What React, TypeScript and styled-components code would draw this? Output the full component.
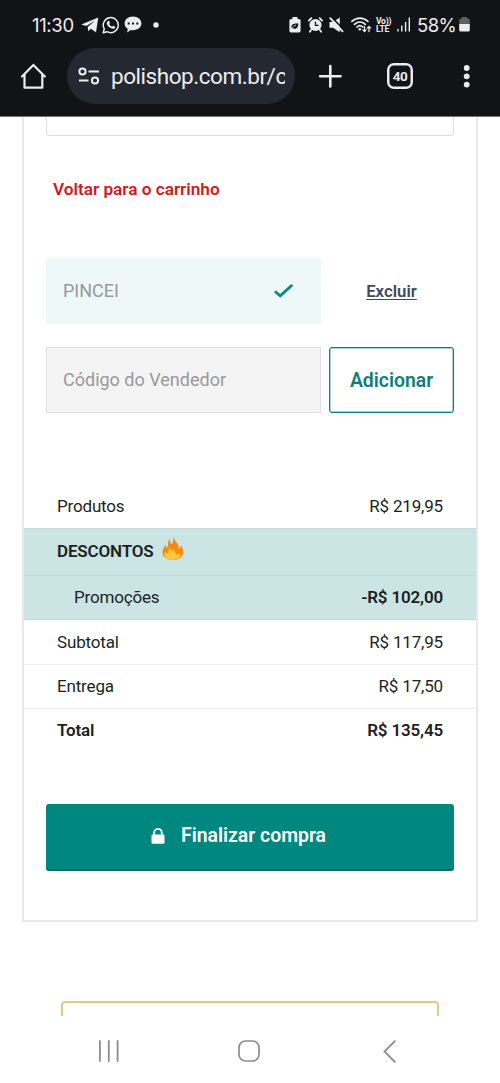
import React from "react";
import styled, { createGlobalStyle } from "styled-components";

const GlobalStyle = createGlobalStyle`
  *, *::before, *::after { box-sizing: border-box; }
  body { margin: 0; background: #fff; font-family: Roboto, "Liberation Sans", sans-serif; color: #1c1f1f; }
`;

const Screen = styled.div`
  width: 500px;
  height: 1083px;
  display: flex;
  flex-direction: column;
  overflow: hidden;
  background: #fff;
`;

const Header = styled.header`
  height: 117px;
  flex: none;
  background: #121317;
  color: #ededf0;
  border-bottom: 1px solid #77747c;
`;

const StatusBar = styled.div`
  height: 48px;
  display: flex;
  align-items: center;
  padding: 1px 30px 0 32px;
`;

const StatusText = styled.span<{ $width: number; $spacing: number; $ml?: number }>`
  width: ${(p) => p.$width}px;
  margin-left: ${(p) => p.$ml ?? 0}px;
  font-family: Inter, Roboto, sans-serif;
  font-size: 18.5px;
  letter-spacing: ${(p) => p.$spacing}px;
  line-height: 24px;
  white-space: nowrap;
`;

const Icon = styled.svg<{ $ml?: number }>`
  display: block;
  flex: none;
  margin-left: ${(p) => p.$ml ?? 0}px;
`;

const Spacer = styled.div`
  flex: 1;
`;

const Toolbar = styled.div`
  height: 56px;
  display: flex;
  align-items: center;
  padding: 0 28px 0 20px;
`;

const AddressBar = styled.div`
  width: 228px;
  height: 56px;
  margin-left: 20px;
  padding: 0 10px;
  display: flex;
  align-items: center;
  border-radius: 28px;
  background: #242831;
`;

const Url = styled.span`
  flex: 1;
  margin-left: 11px;
  overflow: hidden;
  white-space: nowrap;
  font-size: 22.5px;
  line-height: 30px;
  letter-spacing: -0.45px;
`;

const TabCount = styled.div`
  width: 26px;
  height: 26px;
  margin-left: 45px;
  display: flex;
  align-items: center;
  justify-content: center;
  border: 2px solid #ededf0;
  box-shadow: inset 0 0 0 0.5px #ededf0;
  border-radius: 7px;
  font-size: 13.5px;
  font-weight: 700;
  letter-spacing: -0.5px;
`;

const Page = styled.main`
  height: 899px;
  flex: none;
  padding: 0 22px;
  overflow: hidden;
`;

const Card = styled.section`
  height: 805px;
  border: 2px solid #e9e9ea;
  border-top: 0;
`;

const Section = styled.div`
  padding: 0 22px;
`;

const PanelEnd = styled.div`
  height: 19px;
  border: 1px solid #dedede;
  border-top: 0;
  border-radius: 0 0 3px 3px;
`;

const BackLink = styled.a`
  display: block;
  margin: 41px 0 0 7px;
  color: #d21a20;
  font-size: 17.2px;
  font-weight: 600;
  line-height: 24px;
`;

const FieldRow = styled.div<{ $top: number }>`
  margin-top: ${(p) => p.$top}px;
  height: 66px;
  display: flex;
  gap: 8px;
`;

const Field = styled.div<{ $applied?: boolean }>`
  width: 275px;
  display: flex;
  align-items: center;
  justify-content: space-between;
  padding: 0 26px 0 16px;
  border: 1px solid ${(p) => (p.$applied ? "#eff8f8" : "#e0e0e0")};
  background: ${(p) => (p.$applied ? "#eff8f8" : "#f4f4f4")};
  color: #999;
  font-size: 18px;
`;

const FieldText = styled.span`
  padding-bottom: 2px;
`;

const RemoveLink = styled.a`
  flex: 1;
  display: flex;
  align-items: center;
  justify-content: center;
  color: #424959;
  font-size: 16.8px;
  font-weight: 600;
  text-decoration: underline;
  text-decoration-thickness: 1px;
  text-underline-offset: 2px;
`;

const AddButton = styled.button`
  flex: 1;
  padding: 0;
  border: 1px solid #0b7f79;
  box-shadow: inset 0 0 0 1px rgba(11, 127, 121, 0.35);
  border-radius: 3px;
  background: #fff;
  color: #0b7f79;
  font: 600 19.4px Roboto, sans-serif;
`;

const Totals = styled.div`
  margin-top: 71px;
`;

const Row = styled.div<{ $height: number; $tinted?: boolean; $line?: string; $indent?: boolean }>`
  height: ${(p) => p.$height}px;
  display: flex;
  align-items: center;
  justify-content: space-between;
  padding: 0 33px 0 ${(p) => (p.$indent ? 50 : 33)}px;
  border-bottom: 1px solid ${(p) => p.$line ?? "transparent"};
  background: ${(p) => (p.$tinted ? "#cbe5e4" : "transparent")};
  font-size: 17px;
  letter-spacing: -0.17px;
`;

const Cell = styled.span<{ $bold?: boolean; $lift?: number }>`
  display: flex;
  align-items: center;
  font-weight: ${(p) => (p.$bold ? 600 : 400)};
  padding-bottom: ${(p) => p.$lift ?? 0}px;
`;

const CheckoutButton = styled.button`
  width: 100%;
  height: 67px;
  margin-top: 51px;
  padding: 0 23px 2px 0;
  display: flex;
  align-items: center;
  justify-content: center;
  gap: 16px;
  border: 0;
  border-bottom: 2px solid #096a66;
  border-radius: 3px;
  background: #008780;
  color: #fff;
  font: 600 19.4px Roboto, sans-serif;
`;

const Notice = styled.div`
  height: 40px;
  margin: 79px 39px 0;
  border: 2px solid #e6c785;
  border-radius: 4px;
`;

const NavBar = styled.nav`
  height: 67px;
  display: flex;
  align-items: center;
  padding: 3px 0 0 98px;
`;

const FlameIcon = styled(Icon)`
  margin-bottom: 5px;
`;

const Flame = () => (
  <FlameIcon $ml={9} width="22" height="24" viewBox="0 0 22 24">
    <path d="M3.100 7.400c.2 2 1 3 1.900 3C7.300 10.200 4.600 5 7.900 1.500c-.3 3 .5 5.300 1.700 5.300C11.600 6.800 9.900 3.400 12.200.6c.2 4.700 5 5.800 4.500 10.200-.2 1.600 1.400 1.500 1.600.1.100-1.100 0-1.700 1-3 .1 2.500 2.300 3.500 2.100 7-.3 4.800-4.400 8.100-10.600 8.100C4.600 23 .6 20 .5 15.300.4 12 2.500 10.500 3.100 7.400z" fill="#f28c0f" />
    <path d="M2.300 17.700c0-1.300.4-2.300 1.100-3.100.2 1.500 1 2.300 1.900 2.100 1.900-.4.100-3.700 2.800-6.400.1 2 .5 3.500 1.500 3.600 1.300-.1.700-1.400 1.500-2.400.4 2.600 3 3.200 2.500 5.500-.1 1.300 1.900 1.200 2.200-.9.500 1 .9 1.400 2.200.3.600 1.400.8 2.300.3 3.200-1.200 2.100-3.800 3.300-7.500 3.300-4.900 0-8.500-2.200-8.500-5.200z" fill="#fbc740" />
  </FlameIcon>
);

const BatterySaver = () => (
  <Icon width="12" height="16" viewBox="0 0 12 16">
    <path d="M3.500 0h5v2H10a1.600 1.600 0 0 1 1.600 1.600v10.200a1.600 1.600 0 0 1-1.600 1.600H2A1.600 1.600 0 0 1 .4 13.800V3.600A1.600 1.600 0 0 1 2 2h1.500z" fill="#ededf0" />
    <path d="M2.500 9.400c0-2.400 3-2.800 6.800-3.200.2 3.400-1.300 5.600-3.900 5.600-.7 0-1.300-.3-1.700-.7l-1.300 1" fill="#121317" />
    <path d="M2.200 12.100c1.500-2.500 3.100-3.400 4.900-4.100" stroke="#ededf0" strokeWidth=".8" fill="none" />
  </Icon>
);

const Alarm = () => (
  <Icon $ml={7} width="15" height="16" viewBox="0 0 15 16">
    <circle cx="7.500" cy="8" r="6.100" fill="#ededf0" />
    <path d="M.9 3.600 3.300 1.200M14.100 3.600 11.700 1.200M3 13l-1.100 1.700M12 13l1.100 1.700" stroke="#ededf0" strokeWidth="1.800" strokeLinecap="round" />
    <path d="M7.500 4.700v3.700h3" stroke="#121317" strokeWidth="1.300" fill="none" />
  </Icon>
);

const Muted = () => (
  <Icon $ml={6} width="16" height="16" viewBox="0 0 16 16">
    <path d="M.5 5h3.600L10.800.6v14.600L4.100 10.700H.5z" fill="#ededf0" />
    <path d="M2.600.4 15.500 13.200" stroke="#121317" strokeWidth="1.600" />
    <path d="M1.200 1.200 13.600 14.300" stroke="#ededf0" strokeWidth="1.800" strokeLinecap="round" />
  </Icon>
);

const Wifi = () => (
  <Icon $ml={6} width="21" height="16" viewBox="0 0 21 16">
    <g fill="none" stroke="#ededf0" strokeWidth="1.700" strokeLinecap="round">
      <path d="M.9 4.400c4.600-4.400 11.400-4.400 16 0M3.500 7.300c3.200-3 7.600-3 10.800 0M6 10c1.700-1.600 4-1.600 5.700 0" />
      <path d="M13.500 9.500v5m-1.600-1.600 1.600 1.700 1.600-1.700M18 14.500v-5m-1.600 1.600L18 9.400l1.600 1.700" strokeWidth="1.300" />
    </g>
    <circle cx="8.800" cy="12.300" r="1.300" fill="#ededf0" />
  </Icon>
);

const VoLteBadge = styled.span`
  width: 16px;
  margin-left: 4px;
  display: flex;
  flex-direction: column;
  font-size: 8.6px;
  font-weight: 700;
  line-height: 8px;
  letter-spacing: -0.3px;
  white-space: nowrap;
`;

const Signal = () => (
  <Icon $ml={5} width="14" height="15" viewBox="0 0 14 15">
    <path d="M1 12.500v1.500M4.800 9v5M8.600 5.500V14M12.300 1v13" stroke="#ededf0" strokeWidth="1.400" strokeLinecap="round" />
  </Icon>
);

const Battery = () => (
  <Icon $ml={2} width="11" height="15" viewBox="0 0 11 15">
    <path d="M3 0h5v1.500h1.300A1.500 1.500 0 0 1 10.800 3v4H.2V3a1.500 1.500 0 0 1 1.500-1.500H3z" fill="#606064" />
    <path d="M.2 7h10.600v6a1.500 1.500 0 0 1-1.500 1.500H1.700A1.500 1.500 0 0 1 .2 13z" fill="#ededf0" />
  </Icon>
);

const summary = [
  { label: "Subtotal", value: "R$ 117,95", line: "#f0f0f0", height: 45, lift: 1 },
  { label: "Entrega", value: "R$ 17,50", line: "#f0f0f0", height: 44, lift: 1 },
  { label: "Total", value: "R$ 135,45", bold: true, height: 44, lift: 1 },
];

export default function App() {
  return (
    <Screen>
      <GlobalStyle />
      <Header>
        <StatusBar>
          <StatusText $width={49} $spacing={-0.35}>11:30</StatusText>
          <Icon width="18" height="16" viewBox="0 0 18 16">
            <path d="M.3 7.500 17.300.4 15 15.300 9.800 11.700 7.200 14.300 6.700 9.900 14 3.500 5.300 8.900z" fill="#ededf0" />
          </Icon>
          <Icon $ml={3} width="18" height="18" viewBox="0 0 18 18">
            <path d="M1.200 16.800 2.300 12.900A7.500 7.500 0 1 1 5.200 15.700z" fill="none" stroke="#ededf0" strokeWidth="1.500" strokeLinejoin="round" />
            <path d="M6.300 4.900c.4-.2.8-.1 1 .4l.6 1.400c.1.500-.5 1-.7 1.300.7 1.400 1.700 2.300 3 2.800.5-.4.800-1.100 1.300-.9l1.600.8c.4.200.2.800-.1 1.300-.9 1.100-2.500 1.100-4.300.1-1.900-1-3.200-2.600-3.800-4.100-.5-1.300.2-2.600 1.400-3.100z" fill="#ededf0" />
          </Icon>
          <Icon $ml={4} width="18" height="17" viewBox="0 0 18 17">
            <path d="M9 .4c4.900 0 8.400 3 8.400 6.900s-3.500 6.900-8.400 6.900c-1 0-1.500 0-2.300-.2L3.200 16.500l.5-3.700C1.700 11.500.6 9.600.6 7.300.6 3.400 4.100.4 9 .4z" fill="#ededf0" />
            <path d="M3.700 6.500h2v2h-2zM8 6.500h2v2H8zM12.300 6.500h2v2h-2z" fill="#121317" />
          </Icon>
          <Icon $ml={11} width="6" height="6" viewBox="0 0 6 6">
            <circle cx="3" cy="3" r="2.700" fill="#ededf0" />
          </Icon>
          <Spacer />
          <BatterySaver />
          <Alarm />
          <Muted />
          <Wifi />
          <VoLteBadge><span>Vo))</span><span>LTE</span></VoLteBadge>
          <Signal />
          <StatusText $ml={6} $width={40} $spacing={-0.6}>58%</StatusText>
          <Battery />
        </StatusBar>
        <Toolbar>
          <Icon width="27" height="27" viewBox="0 0 27 27">
            <path d="M2 13.500 13.400 2 24.800 13.500M4.500 11.500v13.200h17.800V11.500" fill="none" stroke="#ededf0" strokeWidth="2.200" strokeLinecap="round" strokeLinejoin="round" />
          </Icon>
          <AddressBar>
            <Icon width="23" height="20" viewBox="0 0 23 20">
              <g fill="none" stroke="#ededf0" strokeWidth="2">
                <circle cx="5.500" cy="5.500" r="3.100" />
                <circle cx="18" cy="14.500" r="3.100" />
                <path d="M11.500 5.500H22M2 14.500h9.500" />
              </g>
            </Icon>
            <Url>polishop.com.br/c</Url>
          </AddressBar>
          <Icon $ml={23} width="24" height="24" viewBox="0 0 24 24">
            <path d="M12.300 2.100v20.400M2.100 12.300h20.400" stroke="#ededf0" strokeWidth="2.600" strokeLinecap="round" />
          </Icon>
          <TabCount>40</TabCount>
          <Spacer />
          <Icon width="10" height="24" viewBox="0 0 10 24">
            <g fill="#ededf0">
              <circle cx="4.700" cy="4" r="2.900" />
              <circle cx="4.700" cy="12.300" r="2.900" />
              <circle cx="4.700" cy="20.600" r="2.900" />
            </g>
          </Icon>
        </Toolbar>
      </Header>

      <Page>
        <Card>
          <Section>
            <PanelEnd />
            <BackLink>Voltar para o carrinho</BackLink>
            <FieldRow $top={57}>
              <Field $applied>
                <FieldText>PINCEI</FieldText>
                <Icon width="20" height="16" viewBox="0 0 20 16">
                  <path d="M1 8.300 6.200 12.800 18.200 2" fill="none" stroke="#0b8882" strokeWidth="2.800" />
                </Icon>
              </Field>
              <RemoveLink>Excluir</RemoveLink>
            </FieldRow>
            <FieldRow $top={23}>
              <Field><FieldText>Código do Vendedor</FieldText></Field>
              <AddButton>Adicionar</AddButton>
            </FieldRow>
          </Section>

          <Totals>
            <Row $height={45} $line="#c7dbdb">
              <Cell>Produtos</Cell>
              <Cell>R$ 219,95</Cell>
            </Row>
            <Row $height={47} $tinted $line="#c1d8d8">
              <Cell $bold $lift={2}>DESCONTOS<Flame /></Cell>
            </Row>
            <Row $height={44} $tinted $indent $line="#c1d8d8">
              <Cell $lift={1}>Promoções</Cell>
              <Cell $bold $lift={1}>-R$ 102,00</Cell>
            </Row>
            {summary.map((o) => (
              <Row key={o.label} $height={o.height} $line={o.line}>
                <Cell $bold={o.bold} $lift={o.lift}>{o.label}</Cell>
                <Cell $bold={o.bold} $lift={o.lift}>{o.value}</Cell>
              </Row>
            ))}
          </Totals>

          <Section>
            <CheckoutButton>
              <Icon width="14" height="16" viewBox="0 0 14 16">
                <path d="M3.200 7V4.700a3.800 3.800 0 0 1 7.600 0V7" fill="none" stroke="#fff" strokeWidth="1.900" />
                <rect x=".5" y="6.600" width="13" height="9.200" rx="1.200" fill="#fff" />
              </Icon>
              Finalizar compra
            </CheckoutButton>
          </Section>
        </Card>
        <Notice />
      </Page>

      <NavBar>
        <Icon width="22" height="22" viewBox="0 0 22 22">
          <path d="M1.900 1v20M10.800 1v20M19.600 1v20" stroke="#8c8c8e" strokeWidth="1.800" strokeLinecap="round" />
        </Icon>
        <Icon $ml={118} width="22" height="22" viewBox="0 0 22 22">
          <rect x="1" y="1" width="20" height="20" rx="6.500" fill="none" stroke="#8c8c8e" strokeWidth="1.700" />
        </Icon>
        <Icon $ml={122} width="14" height="23" viewBox="0 0 14 23">
          <path d="M12.800 1.200 2.500 11.500l10.300 10.300" fill="none" stroke="#8c8c8e" strokeWidth="1.800" strokeLinecap="round" />
        </Icon>
      </NavBar>
    </Screen>
  );
}
